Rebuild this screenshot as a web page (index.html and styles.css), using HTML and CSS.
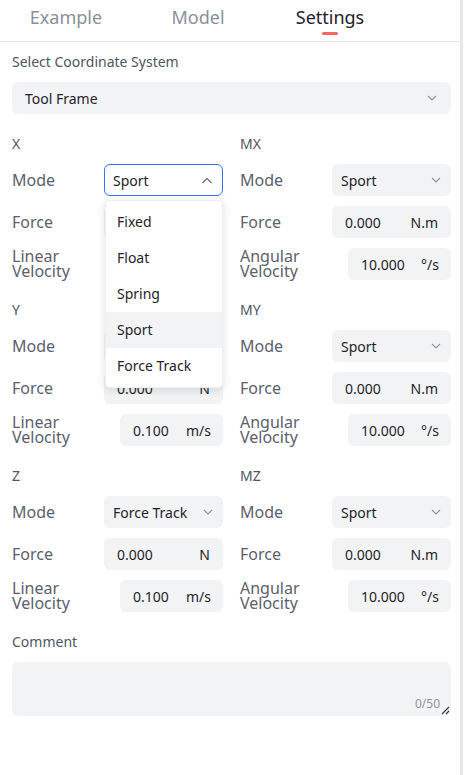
FILE: index.html
```html
<!DOCTYPE html>
<html>
<head>
<meta charset="utf-8">
<link rel="stylesheet" href="styles.css">
</head>
<body>
<div class="panel">
  <div class="tabs">
    <div class="tab">Example</div>
    <div class="tab">Model</div>
    <div class="tab active">Settings</div>
  </div>
  <div class="content">
    <div class="field-label">Select Coordinate System</div>
    <div class="select wide"><span>Tool Frame</span><svg class="chev" width="10" height="6" viewBox="0 0 10 6"><path d="M1 1 L5 5 L9 1" fill="none" stroke="#8f959e" stroke-width="1.1"/></svg></div>

    <div class="grid">
      <div class="group">
        <div class="group-title">X</div>
        <div class="row">
          <span class="lbl">Mode</span>
          <div class="select-wrap">
            <div class="select sel focus"><span>Sport</span><svg class="chev" width="12" height="7" viewBox="0 0 12 7"><path d="M1.5 6 L6 1.5 L10.5 6" fill="none" stroke="#646a73" stroke-width="1.2"/></svg></div>
            <div class="menu">
              <div class="opt">Fixed</div>
              <div class="opt">Float</div>
              <div class="opt">Spring</div>
              <div class="opt hover">Sport</div>
              <div class="opt">Force Track</div>
            </div>
          </div>
        </div>
        <div class="row"><span class="lbl">Force</span><div class="input sel"><span>0.000</span><span>N</span></div></div>
        <div class="row"><span class="lbl two"><span class="ln">Linear</span><span class="ln">Velocity</span></span><div class="input vel"><span>0.100</span><span>m/s</span></div></div>
      </div>
      <div class="group">
        <div class="group-title">MX</div>
        <div class="row"><span class="lbl">Mode</span><div class="select sel"><span>Sport</span><svg class="chev" width="10" height="6" viewBox="0 0 10 6"><path d="M1 1 L5 5 L9 1" fill="none" stroke="#8f959e" stroke-width="1.1"/></svg></div></div>
        <div class="row"><span class="lbl">Force</span><div class="input sel"><span>0.000</span><span>N.m</span></div></div>
        <div class="row"><span class="lbl two"><span class="ln">Angular</span><span class="ln">Velocity</span></span><div class="input vel"><span>10.000</span><span>°/s</span></div></div>
      </div>

      <div class="group">
        <div class="group-title">Y</div>
        <div class="row"><span class="lbl">Mode</span><div class="select sel"><span>Sport</span><svg class="chev" width="10" height="6" viewBox="0 0 10 6"><path d="M1 1 L5 5 L9 1" fill="none" stroke="#8f959e" stroke-width="1.1"/></svg></div></div>
        <div class="row"><span class="lbl">Force</span><div class="input sel"><span>0.000</span><span>N</span></div></div>
        <div class="row"><span class="lbl two"><span class="ln">Linear</span><span class="ln">Velocity</span></span><div class="input vel"><span>0.100</span><span>m/s</span></div></div>
      </div>
      <div class="group">
        <div class="group-title">MY</div>
        <div class="row"><span class="lbl">Mode</span><div class="select sel"><span>Sport</span><svg class="chev" width="10" height="6" viewBox="0 0 10 6"><path d="M1 1 L5 5 L9 1" fill="none" stroke="#8f959e" stroke-width="1.1"/></svg></div></div>
        <div class="row"><span class="lbl">Force</span><div class="input sel"><span>0.000</span><span>N.m</span></div></div>
        <div class="row"><span class="lbl two"><span class="ln">Angular</span><span class="ln">Velocity</span></span><div class="input vel"><span>10.000</span><span>°/s</span></div></div>
      </div>

      <div class="group">
        <div class="group-title">Z</div>
        <div class="row"><span class="lbl">Mode</span><div class="select sel"><span>Force Track</span><svg class="chev" width="10" height="6" viewBox="0 0 10 6"><path d="M1 1 L5 5 L9 1" fill="none" stroke="#8f959e" stroke-width="1.1"/></svg></div></div>
        <div class="row"><span class="lbl">Force</span><div class="input sel"><span>0.000</span><span>N</span></div></div>
        <div class="row"><span class="lbl two"><span class="ln">Linear</span><span class="ln">Velocity</span></span><div class="input vel"><span>0.100</span><span>m/s</span></div></div>
      </div>
      <div class="group">
        <div class="group-title">MZ</div>
        <div class="row"><span class="lbl">Mode</span><div class="select sel"><span>Sport</span><svg class="chev" width="10" height="6" viewBox="0 0 10 6"><path d="M1 1 L5 5 L9 1" fill="none" stroke="#8f959e" stroke-width="1.1"/></svg></div></div>
        <div class="row"><span class="lbl">Force</span><div class="input sel"><span>0.000</span><span>N.m</span></div></div>
        <div class="row"><span class="lbl two"><span class="ln">Angular</span><span class="ln">Velocity</span></span><div class="input vel"><span>10.000</span><span>°/s</span></div></div>
      </div>
    </div>

    <div class="field-label comment-label">Comment</div>
    <div class="textarea">
      <span class="count">0/50</span>
      <svg class="resize" width="9" height="9" viewBox="0 0 9 9"><path d="M1 8 L8 1 M5 8 L8 5" stroke="#333" stroke-width="1.1" fill="none"/></svg>
    </div>
  </div>
</div>
</body>
</html>
```
FILE: styles.css
```css
* { box-sizing: border-box; }
html, body { margin: 0; padding: 0; background: #fff; }
body {
  font-family: "Noto Sans", "Liberation Sans", sans-serif;
  color: #1f2329;
  width: 464px;
  height: 775px;
  overflow: hidden;
}
.panel {
  width: 463px;
  height: 775px;
  border-right: 3px solid #e6e7ed;
}
.tabs {
  display: flex;
  height: 42px;
  border-bottom: 1px solid #e4e5e8;
}
.tab {
  position: relative;
  flex: 0 0 132px;
  text-align: center;
  font-size: 18px;
  line-height: 26px;
  padding-top: 4px;
  color: #8a9099;
}
.tab.active { color: #1f2329; }
.tab.active::after {
  content: "";
  position: absolute;
  left: 58px;
  top: 32px;
  width: 16px;
  height: 3px;
  border-radius: 2px;
  background: #f76560;
}
.content {
  padding: 10px 9px 0 12px;
}
.field-label {
  font-size: 14px;
  line-height: 20px;
  color: #4e5561;
}
.select, .input {
  display: flex;
  align-items: center;
  justify-content: space-between;
  height: 32px;
  background: #f2f3f5;
  border-radius: 6px;
  font-size: 14px;
  color: #1f2329;
}
.select.wide {
  margin-top: 10px;
  padding: 0 14px 0 13px;
  font-size: 14px;
}
.grid {
  margin-top: 20px;
  display: grid;
  grid-template-columns: 211px 211px;
  column-gap: 17px;
  row-gap: 20px;
}
.group {
  display: flex;
  flex-direction: column;
  gap: 10px;
}
.group-title {
  font-size: 14px;
  line-height: 20px;
  color: #4e5561;
}
.row {
  display: flex;
  align-items: center;
  justify-content: space-between;
  height: 32px;
}
.lbl {
  font-size: 16px;
  color: #5a616c;
}
.lbl.two {
  display: flex;
  flex-direction: column;
}
.ln {
  display: block;
  height: 15px;
  line-height: 15px;
}
.select.sel {
  width: 119px;
  padding: 0 10px 0 9px;
}
.input.sel {
  width: 119px;
  padding: 0 13px;
}
.input.vel {
  width: 103px;
  padding: 0 12px 0 13px;
}
.select-wrap { position: relative; }
.select.focus {
  background: #fff;
  border: 1px solid #3370ff;
  padding: 0 9px 0 8px;
}
.menu {
  position: absolute;
  left: 1px;
  top: 36px;
  width: 118px;
  padding: 3px 0;
  background: #fff;
  border-radius: 4px;
  box-shadow: 0 2px 8px rgba(31, 35, 41, 0.14);
  border: 1px solid #eceef1;
  z-index: 10;
}
.opt {
  height: 36px;
  line-height: 36px;
  padding-left: 11px;
  font-size: 14px;
  color: #1f2329;
}
.opt.hover { background: #f2f3f5; }
.comment-label { margin-top: 20px; }
.textarea {
  position: relative;
  margin-top: 10px;
  height: 54px;
  background: #f2f3f5;
  border-radius: 6px;
}
.count {
  position: absolute;
  right: 11px;
  bottom: 4px;
  font-size: 12px;
  color: #8f959e;
}
.resize {
  position: absolute;
  right: 1px;
  bottom: 1px;
}
```
